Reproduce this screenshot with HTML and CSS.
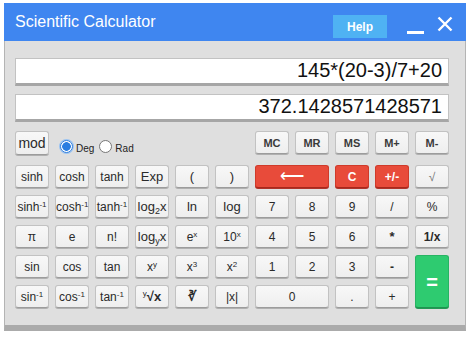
FILE: index.html
```html
<!DOCTYPE html>
<html>
<head>
<meta charset="utf-8">
<link rel="stylesheet" href="styles.css">
</head>
<body>
<div class="calc">
  <div class="titlebar">
    <span class="title">Scientific Calculator</span>
    <span class="help">Help</span>
    <span class="minimize"></span>
    <svg class="close" width="16" height="16" viewBox="0 0 16 16"><path d="M1.5 1.5 L14.5 14.5 M14.5 1.5 L1.5 14.5" stroke="#fff" stroke-width="2.4" fill="none"/></svg>
  </div>
  <div class="panel">
    <div class="display">145*(20-3)/7+20</div>
    <div class="display">372.1428571428571</div>
    <div class="toprow">
      <button class="btn mod">mod</button>
      <div class="radios">
        <span class="radio on"></span><span class="rlabel">Deg</span>
        <span class="radio"></span><span class="rlabel">Rad</span>
      </div>
      <button class="btn mem c7">MC</button>
      <button class="btn mem">MR</button>
      <button class="btn mem">MS</button>
      <button class="btn mem">M+</button>
      <button class="btn mem">M-</button>
    </div>
    <div class="keys">
      <button class="btn">sinh</button>
      <button class="btn">cosh</button>
      <button class="btn">tanh</button>
      <button class="btn big">Exp</button>
      <button class="btn big">(</button>
      <button class="btn big">)</button>
      <button class="btn red span2">&#x27F5;</button>
      <button class="btn red">C</button>
      <button class="btn red">+/-</button>
      <button class="btn light">&#x221A;</button>

      <button class="btn">sinh<sup>-1</sup></button>
      <button class="btn">cosh<sup>-1</sup></button>
      <button class="btn">tanh<sup>-1</sup></button>
      <button class="btn big">log<sub>2</sub>x</button>
      <button class="btn big">ln</button>
      <button class="btn big">log</button>
      <button class="btn">7</button>
      <button class="btn">8</button>
      <button class="btn">9</button>
      <button class="btn">/</button>
      <button class="btn">%</button>

      <button class="btn">&#x3C0;</button>
      <button class="btn">e</button>
      <button class="btn">n!</button>
      <button class="btn big">log<sub>y</sub>x</button>
      <button class="btn">e<sup>x</sup></button>
      <button class="btn">10<sup>x</sup></button>
      <button class="btn">4</button>
      <button class="btn">5</button>
      <button class="btn">6</button>
      <button class="btn bold big">*</button>
      <button class="btn bold">1/x</button>

      <button class="btn">sin</button>
      <button class="btn">cos</button>
      <button class="btn">tan</button>
      <button class="btn">x<sup>y</sup></button>
      <button class="btn">x<sup>3</sup></button>
      <button class="btn">x<sup>2</sup></button>
      <button class="btn">1</button>
      <button class="btn">2</button>
      <button class="btn">3</button>
      <button class="btn bold">-</button>
      <button class="btn green">=</button>

      <button class="btn">sin<sup>-1</sup></button>
      <button class="btn">cos<sup>-1</sup></button>
      <button class="btn">tan<sup>-1</sup></button>
      <button class="btn bold big"><sup class="ry">y</sup>&#x221A;x</button>
      <button class="btn bold big">&#x221B;</button>
      <button class="btn">|x|</button>
      <button class="btn span2">0</button>
      <button class="btn">.</button>
      <button class="btn">+</button>
    </div>
  </div>
</div>
</body>
</html>
```
FILE: styles.css
```css
html, body {
  margin: 0;
  padding: 0;
  background: #ffffff;
}
body {
  font-family: "Liberation Sans", Arial, sans-serif;
}
.calc {
  margin: 3px 0 0 4px;
  width: 462px;
}
.titlebar {
  height: 38px;
  background: #3f86f0;
  display: flex;
  align-items: center;
  padding: 0 13px 0 11px;
  box-sizing: border-box;
  color: #fff;
}
.title {
  font-size: 16px;
  flex: 1;
  margin-top: -1px;
}
.help {
  width: 54px;
  height: 23px;
  background: #4fb2f3;
  font-size: 12px;
  font-weight: bold;
  display: flex;
  align-items: center;
  justify-content: center;
  margin-top: 9px;
}
.minimize {
  width: 17px;
  height: 3px;
  background: #fff;
  margin: 20px 0 0 20px;
}
.close {
  margin-left: 13px;
  margin-top: 3px;
}
.panel {
  background: #dfdfdf;
  border-left: 1px solid #b4b4b4;
  border-right: 1px solid #b4b4b4;
  border-bottom: 6px solid #ababab;
  padding: 17px 16px 17px 10px;
}
.display {
  height: 28px;
  box-sizing: border-box;
  background: #fff;
  border: 1px solid #c2c2c2;
  border-bottom: 3px solid #a6a6a6;
  font-size: 20px;
  color: #111;
  text-align: right;
  padding-right: 6px;
  line-height: 23px;
  margin-bottom: 8px;
}
.toprow {
  margin-top: 9px;
  display: grid;
  grid-template-columns: repeat(11, 34px);
  column-gap: 6px;
  height: 24px;
}
.radios {
  grid-column: 2 / span 4;
  display: flex;
  align-items: center;
  padding-left: 5px;
  padding-top: 6px;
}
.radio {
  width: 11px;
  height: 11px;
  border: 1px solid #777;
  border-radius: 50%;
  background: #fff;
  box-sizing: content-box;
}
.radio.on {
  border-color: #2b7de0;
  background: radial-gradient(circle, #2b7de0 0 4px, #fff 4.6px);
  box-shadow: 0 0 0 1px #9cc4f2;
}
.rlabel {
  font-size: 10px;
  color: #222;
  margin: 4px 5px 0 3px;
}
.c7 {
  grid-column: 7;
}
.keys {
  margin-top: 10px;
  display: grid;
  grid-template-columns: repeat(11, 34px);
  grid-auto-rows: 23px;
  gap: 7px 6px;
}
.btn {
  font-family: "Liberation Sans", Arial, sans-serif;
  font-size: 12px;
  color: #2a2a2a;
  background: linear-gradient(#f8f8f8, #eeeeee);
  border: 1px solid #c2c2c2;
  border-bottom-color: #9c9c9c;
  box-shadow: 0 1px 0 #b0b0b0;
  border-radius: 3px;
  padding: 0;
  margin: 0;
  height: 23px;
  text-align: center;
  white-space: nowrap;
  line-height: 14px;
}
.btn.mod {
  font-size: 14px;
  height: 24px;
}
.btn.mem {
  font-weight: bold;
  font-size: 11px;
  color: #3a3a3a;
  height: 23px;
}
.btn.big {
  font-size: 13px;
}
.btn.bold {
  font-weight: bold;
}
.btn.light {
  color: #777;
}
.btn sup {
  font-size: 8px;
  line-height: 0;
  vertical-align: 4px;
}
.btn sub {
  font-size: 9px;
  line-height: 0;
  vertical-align: -3px;
}
.btn sup.ry {
  font-size: 8px;
  margin-right: 0;
  vertical-align: 5px;
  font-weight: normal;
}
.span2 {
  grid-column: span 2;
}
.btn.red {
  background: #e84b3a;
  border-color: #cf3a2a;
  border-bottom-color: #a8281b;
  box-shadow: 0 1px 0 #b0332a;
  color: #fff;
  font-weight: bold;
}
.btn.red.span2 {
  font-size: 17px;
  font-weight: normal;
}
.btn.green {
  grid-row: span 2;
  height: 53px;
  background: #2ecb70;
  border-color: #27b463;
  border-bottom-color: #1f9450;
  box-shadow: 0 1px 0 #239a55;
  color: #fff;
  font-weight: bold;
  font-size: 20px;
}
```
